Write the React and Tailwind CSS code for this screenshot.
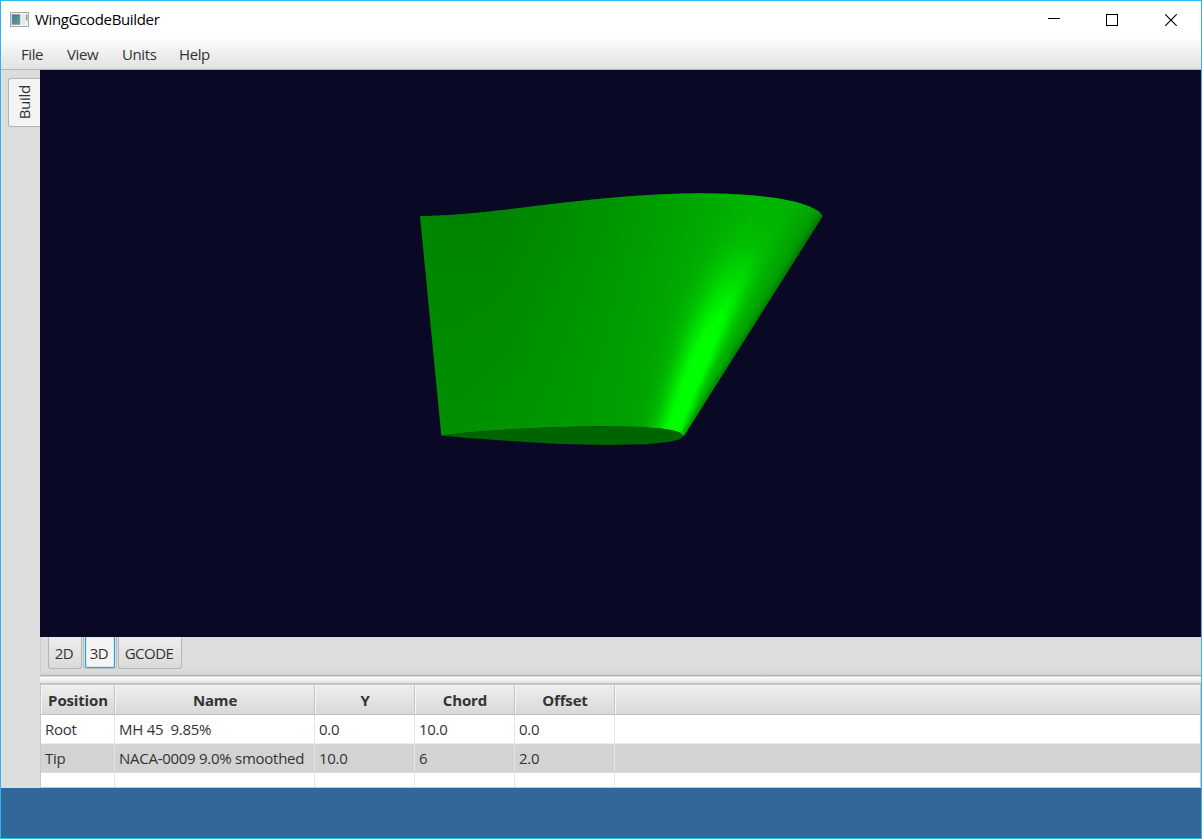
import React from "react";

const ROOT = [[420, 216], [431, 215.9], [443, 215.3], [463, 214.1], [483, 212.2], [508, 209.4], [533, 206.3], [567, 202.3], [590, 199.8], [613, 197.6], [636, 195.8], [660, 194.4], [680, 193.6], [700, 193.3], [727, 193.8], [753, 195.4], [777, 198.2], [797, 202.3], [810, 206.7], [819, 211.6], [822.5, 216]];
const TIP = [[441.3, 435.3], [467, 432.5], [490, 430.7], [513, 429.2], [536, 428], [560, 427.1], [580, 426.5], [600, 426.3], [633, 426.7], [660, 428.3], [673, 430.3], [680, 432.4], [683.7, 436]];
const TIP_LOWER = [[683.7, 436], [680, 439.2], [670, 441.8], [647, 444.2], [607, 445], [560, 443.9], [510, 441], [467, 438], [441.3, 435.6]];

function sample(points, u) {
  const x = points[0][0] + (points[points.length - 1][0] - points[0][0]) * u;
  let i = 0;
  while (i < points.length - 2 && points[i + 1][0] < x) i++;
  const [x0, y0] = points[i];
  const [x1, y1] = points[i + 1];
  return [x, y0 + ((y1 - y0) * (x - x0)) / (x1 - x0)];
}

function lookup(table, t) {
  let i = 0;
  while (i < table.length - 2 && table[i + 1][0] < t) i++;
  const [a, va] = table[i];
  const [b, vb] = table[i + 1];
  const k = Math.max(0, Math.min(1, (t - a) / (b - a)));
  return va + (vb - va) * k;
}

const DIFFUSE_ROOT = [[0, 134], [0.08, 132], [0.2, 132], [0.3, 137], [0.5, 150], [0.7, 168], [0.85, 181], [0.93, 179], [0.97, 166], [0.99, 150], [1, 115]];
const DIFFUSE_TIP = [[0, 143], [0.3, 148], [0.6, 155], [0.8, 162], [0.93, 172], [0.985, 172], [1, 135]];
const PEAK_U = [[0, 0.86], [0.22, 0.885], [0.57, 0.908], [0.8, 0.935], [1, 0.968]];
const PEAK_GAIN = [[0, 0], [0.12, 4], [0.22, 16], [0.35, 44], [0.5, 76], [0.65, 98], [0.8, 106], [1, 104]];

function shade(u, v) {
  const base = lookup(DIFFUSE_ROOT, u) * (1 - v) + lookup(DIFFUSE_TIP, u) * v;
  const peak = lookup(PEAK_U, v);
  const d = u - peak;
  const width = d < 0 ? 0.068 - 0.014 * v : 0.042 - 0.024 * v;
  const g = base + lookup(PEAK_GAIN, v) * Math.exp(-(d * d) / (2 * width * width));
  return `rgb(0,${Math.round(Math.min(255, g))},0)`;
}

const COUNT = 150;
const LEVELS = [0, 0.1, 0.2, 0.3, 0.4, 0.5, 0.6, 0.7, 0.8, 0.9, 1];
const STRIPS = Array.from({ length: COUNT }, (_, i) => {
  const at = (k) => 1 - Math.pow(1 - k / COUNT, 1.5);
  const u0 = at(i);
  const u1 = at(i + 1);
  const ue = Math.min(1, u1 + 0.004);
  const mid = (u0 + u1) / 2;
  const a = sample(ROOT, u0);
  const b = sample(ROOT, ue);
  const c = sample(TIP, ue);
  const d = sample(TIP, u0);
  return { id: `strip${i}`, points: [a, b, c, d].join(" "), y1: a[1], y2: d[1], stops: LEVELS.map((v) => [v, shade(mid, v)]) };
});

function Wing() {
  return (
    <svg className="block h-[567px] w-[1161px]" viewBox="40 70 1161 567">
      <defs>
        {STRIPS.map((s) => (
          <linearGradient key={s.id} id={s.id} gradientUnits="userSpaceOnUse" x1="0" x2="0" y1={s.y1} y2={s.y2}>
            {s.stops.map(([v, color]) => <stop key={v} offset={v} stopColor={color} />)}
          </linearGradient>
        ))}
      </defs>
      {STRIPS.map((s) => <polygon key={s.id} points={s.points} fill={`url(#${s.id})`} />)}
      <polygon points={[...TIP, ...TIP_LOWER].join(" ")} fill="#006400" />
    </svg>
  );
}

function AppIcon() {
  return (
    <svg className="ml-[9px] h-4 w-[19px]" viewBox="0 0 19 16">
      <defs>
        <linearGradient id="pane" x1="0" y1="0" x2="1" y2="1">
          <stop offset="0" stopColor="#3f6fa5" />
          <stop offset="1" stopColor="#58b078" />
        </linearGradient>
      </defs>
      <rect x="0.5" y="0.5" width="18" height="14" fill="#f4f4f4" stroke="#a3a8ac" />
      <rect x="2" y="2.5" width="8" height="10" fill="url(#pane)" stroke="#8496a5" strokeWidth=".6" />
      <rect x="11.5" y="2.5" width="4" height="10" fill="#e6e8e8" />
      <rect x="16" y="2.5" width="1.4" height="6" fill="#68a78c" />
    </svg>
  );
}

const COLUMNS = [
  { title: "Position", width: "w-[74px]" },
  { title: "Name", width: "w-[200px]" },
  { title: "Y", width: "w-[100px]" },
  { title: "Chord", width: "w-[100px]" },
  { title: "Offset", width: "w-[100px]" },
];

const ROWS = [
  { cells: ["Root", "MH 45  9.85%", "0.0", "10.0", "0.0"], style: "h-[29px] bg-white border-b border-[#ededed]" },
  { cells: ["Tip", "NACA-0009 9.0% smoothed", "10.0", "6", "2.0"], style: "h-[29px] bg-[#d3d3d3] border-b border-[#dedede]" },
  { cells: ["", "", "", "", ""], style: "h-[14px] bg-white" },
];

const TAB = "flex items-center justify-center rounded-b-[3px] border border-t-0 border-[#b5b5b5] bg-linear-to-b from-[#ededed] to-[#dadada]";

export default function App() {
  return (
    <div className="flex h-[839px] w-[1202px] flex-col overflow-hidden border border-[#2bb5f5] bg-[#336699] font-['Open_Sans','Noto_Sans',sans-serif] text-[15px] leading-5 tracking-[-0.27px] text-[#333]">
      <header className="flex h-[38px] shrink-0 items-center bg-white text-black">
        <AppIcon />
        <span className="ml-1.5 pb-0.5 tracking-[-0.34px]">WingGcodeBuilder</span>
        <svg className="ml-auto mr-[23px] h-[13px] w-[130px]" viewBox="0 0 130 13" shapeRendering="crispEdges">
          <path d="M0 4.5h12" stroke="#000" />
          <rect x="58.5" y=".5" width="11" height="11" fill="none" stroke="#000" />
          <path d="m117.2.3 11.5 11.5M128.7.3 117.2 11.8" stroke="#000" strokeWidth="1.1" shapeRendering="auto" />
        </svg>
      </header>
      <nav className="flex h-[31px] shrink-0 items-center border-b border-[#b5b5b5] bg-linear-to-b from-[#fcfcfc] to-[#e2e2e2] pb-px pl-5 tracking-[-0.4px]">
        <span className="w-[46px]">File</span>
        <span className="w-[55px]">View</span>
        <span className="w-[57px]">Units</span>
        <span>Help</span>
      </nav>
      <div className="flex h-[718px] shrink-0">
        <aside className="flex w-[39px] shrink-0 flex-col items-end bg-[#dddddd] pt-2">
          <div className="flex h-[49px] w-8 items-center justify-center rounded-l-[3px] border border-r-0 border-[#b5b5b5] bg-[#f4f4f4] pr-0.5">
            <span className="rotate-180 [writing-mode:vertical-rl]">Build</span>
          </div>
        </aside>
        <main className="flex w-[1161px] flex-col">
          <section className="h-[567px] shrink-0 bg-[#090926]">
            <Wing />
          </section>
          <div className="flex h-[39px] shrink-0 items-start border-b border-l border-[#b0b0b0] border-l-[#cccccc] bg-linear-to-b from-[#dddddd] from-85% to-[#d2d2d2] pl-[7px] tracking-[-0.5px]">
            <div className={`${TAB} h-8 w-[34px] pr-0.5 pt-px`}>2D</div>
            <div className="ml-px h-8 w-[34px] rounded-b-[3px] border-x border-b border-[#c0c0c0]">
              <div className="mx-px flex h-[31px] items-center justify-center rounded-b-[2px] border border-t-0 border-[#1ea5d6] bg-[#f4f4f4] pr-0.5 pt-0.5 shadow-[inset_0_0_0_1px_#d3edf8]">3D</div>
            </div>
            <div className={`${TAB} ml-px h-8 w-[64px] pr-0.5 pt-px`}>GCODE</div>
          </div>
          <div className="h-[9px] shrink-0 border-b-2 border-t border-b-[#c4c4c4] border-t-[#d8d8d8] bg-linear-to-b from-white to-[#e1e1e1]" />
          <div className="flex h-[103px] shrink-0 flex-col border-x border-b border-[#c8c8c8]">
            <div className="flex h-[30px] shrink-0 border-b border-[#c0c0c0] bg-linear-to-b from-[#efefef] to-[#d8d8d8] font-bold tracking-[-0.15px]">
              {COLUMNS.map((c) => (
                <div key={c.title} className={`${c.width} flex items-center justify-center border-r border-[#c4c4c4] pl-px shadow-[inset_1px_1px_0_#f7f7f7]`}>
                  {c.title}
                </div>
              ))}
              <div className="flex-1 shadow-[inset_1px_1px_0_#f7f7f7]" />
            </div>
            {ROWS.map((row, i) => (
              <div key={i} className={`flex shrink-0 ${row.style}`}>
                {row.cells.map((cell, j) => (
                  <div key={j} className={`${COLUMNS[j].width} flex items-center whitespace-pre border-r border-[#e4e4e4] pb-px pl-1`}>
                    {cell}
                  </div>
                ))}
              </div>
            ))}
          </div>
        </main>
      </div>
      <footer className="flex-1 bg-[#336699]" />
    </div>
  );
}
